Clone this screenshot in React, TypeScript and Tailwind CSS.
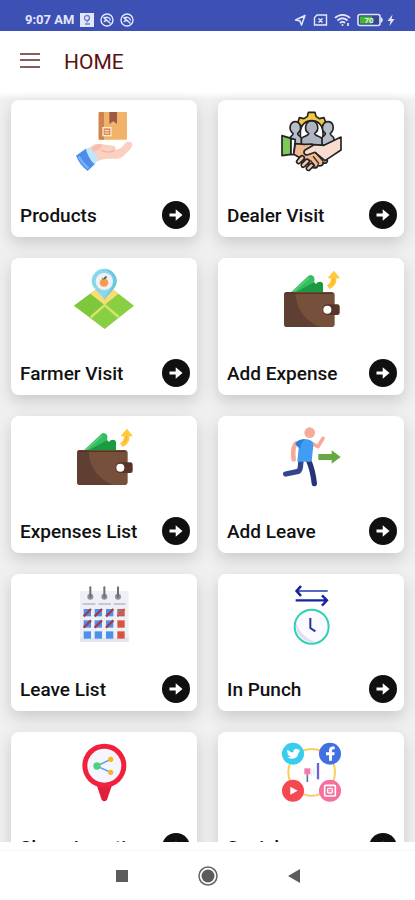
import type { ReactNode } from "react";

type Tile = {
  label: string;
  href: string;
  icon: ReactNode;
};

function Art({ children }: { children: ReactNode }) {
  return (
    <svg viewBox="0 0 180 180" className="h-[60px] w-[60px] overflow-visible" fill="none" aria-hidden="true">
      {children}
    </svg>
  );
}

function ProductsArt() {
  return (
    <Art>
      <rect x="74" y="3" width="85" height="83" rx="3" fill="#f3b269" />
      <path d="M77 3h13v83H77a3 3 0 0 1-3-3V6a3 3 0 0 1 3-3Z" fill="#cf8350" />
      <path d="M106 3h23v36l-11-8-12 8Z" fill="#9a5a45" />
      <rect x="87" y="50" width="24" height="24" fill="#d98b5c" stroke="#ffe9cf" strokeWidth="4" />
      <path d="M92 59h13M92 66h13" stroke="#ffe9cf" strokeWidth="3" />
      <path
        d="M47 112C58 98 72 96 84 100l34 4c10 3 9 12 2 15l21-9c7-3 10-12 16-16 8-4 19 0 18 8-6 16-20 28-34 38-15 6-34 2-48 4-11 1-17 5-24 7Z"
        fill="#fbd0c0"
      />
      <path d="M84 119c12 5 26 6 38-1" stroke="#eeb3a2" strokeWidth="4" strokeLinecap="round" />
      <path d="M52 112c12-14 24-14 34-11l-9 12-20 9Z" fill="#f7bcae" />
      <path d="M31 114l18-5 24 35-11 17Z" fill="#bfe6fb" />
      <path d="M6 134l29-21c5 17 14 34 27 47l-21 20C25 168 13 152 6 134Z" fill="#4d8eea" />
      <path d="M14 137c8 15 17 26 30 36" stroke="#75b0fa" strokeWidth="7" />
    </Art>
  );
}

function DealerArt() {
  return (
    <Art>
      <g stroke="#222327" strokeWidth="5" strokeLinejoin="round" strokeLinecap="round">
        <path
          d="M50 37l5-17 14 3 10-7 3-12h20l3 12 10 7 14-3 6 17-11 7-7 20H67l-6-20Z"
          fill="#f5c842"
        />
        <path d="M58 65c0-48 68-48 68 0v30H58Z" fill="#fff" />
        <path d="M26 84c0-9 12-10 10-17C20 55 28 32 43 32s23 23 7 35c-1 7 10 8 12 17v18H26Z" fill="#b9bdc7" />
        <path d="M122 84c0-9 13-10 11-17-16-12-8-35 8-35s22 23 7 35c-2 7 11 8 11 17v18h-37Z" fill="#b9bdc7" />
        <path d="M61 103V84c2-10 22-7 22-17-16-10-10-37 9-37s25 27 9 37c0 10 20 7 22 17v19Z" fill="#aeb4c0" />
        <path d="M3 74l27 8v48L3 134Z" fill="#81c957" />
        <path d="M30 82l13 4-5 44-8 1Z" fill="#fff" />
        <path d="M43 98l28 2 22-1 20 11 25 35c4 9-5 15-12 9 2 9-9 14-15 8 0 9-12 12-19 5L70 148l-32-18Z" fill="#f0b98e" />
        <path d="M180 78v39l-48 32-30-25-23 8c-13 0-13-13-3-17l23-14 30 2Z" fill="#f9dcd0" />
        <path
          d="M49 147c-6 6 2 15 8 9l12-12c4-7-6-14-11-7Zm13 11c-5 6 3 14 9 9l13-13c4-7-6-13-11-7Zm15 11c-4 6 4 12 9 8l11-11c4-6-5-12-10-7Z"
          fill="#f5c9a6"
        />
        <path d="M104 125l22 25M97 137l16 20M89 149l13 17" strokeWidth="4" />
      </g>
    </Art>
  );
}

function FarmerArt() {
  return (
    <Art>
      <path d="M0 110 92 42l88 68-88 70Z" fill="#89cf43" />
      <path d="M0 110l49-36 43 34-40 39Z" fill="#7fc83c" />
      <path d="M49 74 92 42l41 32-41 34Z" fill="#f8dc75" />
      <path d="M50 145l42-37 42 36" stroke="#d8e56b" strokeWidth="7" />
      <path d="M92 94C83 72 53 61 53 37a37 37 0 0 1 75 0c0 24-27 35-36 57Z" fill="#86d8ea" />
      <path d="M92 94c4-22 26-34 26-57A37 37 0 0 0 90 0a37 37 0 0 1 38 37c0 24-27 35-36 57Z" fill="#69c7df" />
      <circle cx="91" cy="37" r="26" fill="#f0eff8" />
      <ellipse cx="90" cy="41" rx="13" ry="12" fill="#f59a50" />
      <path d="M90 31c-1-7 3-10 9-9-1 6-3 8-9 9Z" fill="#456a3d" />
      <path d="M84 27l6 4" stroke="#456a3d" strokeWidth="3" />
    </Art>
  );
}

function WalletArt() {
  return (
    <Art>
      <path d="M28 71 82 21q6-5 13-1 7 4 5 16L84 71Z" fill="#36bd61" />
      <path d="M42 71 100 39q4 10 10 1 12-5 16 4v27Z" fill="#1c9a3f" />
      <path d="M35 70 84 27" stroke="#5bd27d" strokeWidth="4" />
      <rect x="9" y="69" width="152" height="105" rx="10" fill="#76503b" />
      <path d="M44 69c0 49 27 87 75 105H19a10 10 0 0 1-10-10V79a10 10 0 0 1 10-10Z" fill="#5f3f31" />
      <path d="M13 73h142" stroke="#533429" strokeWidth="4" />
      <path d="M140 106h29q7 0 7 7v18q0 7-7 7h-29q-15 0-15-16t15-16Z" fill="#573629" />
      <circle cx="139" cy="122" r="12" fill="#fff" />
      <path d="M159 5l18 23h-11c2 15-7 27-21 32l-7-12c9-4 13-11 11-20h-10Z" fill="#ffc83d" />
      <path d="M150 46c6-5 8-11 8-18" stroke="#f3a622" strokeWidth="3" />
    </Art>
  );
}

function RunnerArt() {
  return (
    <Art>
      <circle cx="86" cy="17" r="16" fill="#f7aa98" />
      <path d="M46 49c-12 10-11 29-8 48" stroke="#f7aa98" strokeWidth="14" strokeLinecap="round" />
      <path d="M94 50l17 9 15-25" stroke="#f7aa98" strokeWidth="11" strokeLinecap="round" strokeLinejoin="round" />
      <path d="M60 104c-3 12 1 22-8 29l-38 8" stroke="#34458b" strokeWidth="16" strokeLinecap="round" strokeLinejoin="round" />
      <path d="M84 103c9 21 12 32 16 67" stroke="#253578" strokeWidth="16" strokeLinecap="round" strokeLinejoin="round" />
      <path d="M43 51c6-11 17-14 30-14 12 0 24 4 24 16l-5 51H49l4-42Z" fill="#419df3" />
      <path d="M43 51c6-11 17-14 30-14-9 5-14 14-16 28Z" fill="#277fda" />
      <path d="M112 81h40V70l27 20-27 20V99h-40Z" fill="#66a940" />
    </Art>
  );
}

function CalendarArt() {
  const columns = [29, 62, 96, 130];
  const rows = [72, 106, 139];
  return (
    <Art>
      <path d="M18 18h146v152H18Z" fill="#eef0f6" />
      <path d="M18 158h146v12H18Z" fill="#e2e5ed" />
      {[49, 91, 132].map((x) => (
        <g key={x}>
          <circle cx={x} cy="35" r="9" fill="#8d9098" />
          <path d={`M${x} 7v28`} stroke="#6b6e77" strokeWidth="6" strokeLinecap="round" />
        </g>
      ))}
      <path d="M26 57h38M73 57h38M119 57h35" stroke="#b8bbc3" strokeWidth="5" />
      {rows.map((y, r) =>
        columns.map((x, c) => (
          <g key={`${x}-${y}`}>
            <rect x={x} y={y} width="22" height="22" fill={c === 3 ? "#d9533e" : "#4c91ee"} />
            {c === 3 && r === 0 && <path d={`M${x + 3} ${y + 3}h12v15h-12Z`} fill="#6582cb" />}
            {r < 2 && c < 3 && <path d={`M${x} ${y + 22}l22-22`} stroke="#a63a4b" strokeWidth="7" />}
            {r === 0 && c === 3 && <path d={`M${x} ${y + 22}l22-22`} stroke="#d45743" strokeWidth="6" />}
          </g>
        )),
      )}
    </Art>
  );
}

function PunchArt() {
  return (
    <Art>
      <path d="M48 18h92" stroke="#5969bd" strokeWidth="6" />
      <path d="M60 3 47 18l13 15" stroke="#1522a2" strokeWidth="8" />
      <path d="M44 46h93M123 31l15 15-15 16" stroke="#1522a2" strokeWidth="7" />
      <circle cx="92" cy="125" r="51" fill="#fbfbff" stroke="#2dd0b1" strokeWidth="6" />
      <path d="M45 113c-3 39 28 62 62 58-29-7-50-26-62-58Z" fill="#dfdff1" />
      <path d="M88 99v30l15 10" stroke="#2636a1" strokeWidth="6" />
    </Art>
  );
}

function ShareArt() {
  return (
    <Art>
      <path d="M66 121h50l-17 49q-8 9-16 0Z" fill="#df1f3c" />
      <circle cx="91" cy="68" r="66" fill="#f1203c" />
      <circle cx="91" cy="68" r="51" fill="#f3f6ff" />
      <path d="M110 49 69 69l41 19" stroke="#4c94ea" strokeWidth="4" />
      <circle cx="69" cy="69" r="11" fill="#4ed17e" />
      <circle cx="110" cy="49" r="8" fill="#fbb51e" />
      <circle cx="110" cy="88" r="8" fill="#fbb51e" />
    </Art>
  );
}

function SocialArt() {
  return (
    <Art>
      <circle cx="92" cy="88" r="70" stroke="#f6cf60" strokeWidth="6" />
      <circle cx="36" cy="32" r="33" fill="#36cdef" />
      <circle cx="147" cy="32" r="33" fill="#426fe3" />
      <circle cx="36" cy="143" r="33" fill="#f64850" />
      <circle cx="147" cy="143" r="33" fill="#f5709c" />
      <path
        d="M20 20c6 6 11 8 17 8-1-10 9-13 14-8l6-2-3 6 3 1-5 5c-1 16-20 22-34 13 6 0 8-1 10-3-5-2-8-4-9-7l4-1c-4-3-6-5-5-8Z"
        fill="#fff"
      />
      <path d="M144 53V37h-9v-9h9v-5c0-10 6-14 17-12v8c-6 0-8 1-8 5v4h8l-1 9h-7v16Z" fill="#fff" />
      <path d="M28 131l22 12-22 12Z" fill="#fff" />
      <rect x="131" y="127" width="32" height="32" rx="3" stroke="#fff" strokeWidth="5" />
      <rect x="140" y="136" width="14" height="14" rx="3" stroke="#fff" strokeWidth="4" />
      <circle cx="147" cy="143" r="2" fill="#fff" />
      <path d="M79 94v23" stroke="#60749c" strokeWidth="5" />
      <rect x="70" y="76" width="18" height="18" fill="#f27baa" />
      <path d="M92 80v20M99 76v20" stroke="#dceffa" strokeWidth="4" />
      <path d="M111 60v49" stroke="#7162d7" strokeWidth="7" />
    </Art>
  );
}

const tiles: Tile[] = [
  { label: "Products", href: "#products", icon: <ProductsArt /> },
  { label: "Dealer Visit", href: "#dealer-visit", icon: <DealerArt /> },
  { label: "Farmer Visit", href: "#farmer-visit", icon: <FarmerArt /> },
  { label: "Add Expense", href: "#add-expense", icon: <WalletArt /> },
  { label: "Expenses List", href: "#expenses-list", icon: <WalletArt /> },
  { label: "Add Leave", href: "#add-leave", icon: <RunnerArt /> },
  { label: "Leave List", href: "#leave-list", icon: <CalendarArt /> },
  { label: "In Punch", href: "#in-punch", icon: <PunchArt /> },
  { label: "Share Location", href: "#share-location", icon: <ShareArt /> },
  { label: "Social", href: "#social", icon: <SocialArt /> },
];

function TileCard({ tile }: { tile: Tile }) {
  return (
    <a
      href={tile.href}
      className="flex h-[137px] flex-col items-center justify-between rounded-lg bg-white pt-[11px] pb-2 shadow-[0_6px_16px_rgba(0,0,0,0.16)]"
    >
      {tile.icon}
      <span className="flex w-full items-end justify-between pr-[7px] pl-[9px]">
        <span className="text-[19px] leading-[26px] font-medium whitespace-nowrap text-[#111]">{tile.label}</span>
        <svg viewBox="0 0 28 28" className="h-7 w-7 shrink-0" aria-hidden="true">
          <circle cx="14" cy="14" r="14" fill="#101010" />
          <path d="M7.5 12.4h6.2V8.2l6.8 5.8-6.8 5.8v-4.2H7.5Z" fill="#fff" />
        </svg>
      </span>
    </a>
  );
}

function StatusBar() {
  return (
    <div className="flex h-[31px] shrink-0 items-center justify-between bg-[#3d50b4] pt-2 pr-5 pl-[25px] text-[#e3e7fb]">
      <div className="flex items-center gap-[6px]">
        <span className="text-[13px] leading-4 font-bold whitespace-nowrap">9:07 AM</span>
        <svg viewBox="0 0 14 14" className="h-[14px] w-[14px]" fill="none" aria-hidden="true">
          <path d="M0 0h14v14H0Z" fill="#e3e7fb" />
          <circle cx="7" cy="5" r="2.5" stroke="#7180c7" strokeWidth="1.3" />
          <path d="M9.5 4.5c0 3-2.5 3-2.5 5M5 11h5" stroke="#7180c7" strokeWidth="1.3" />
        </svg>
        {[0, 1].map((n) => (
          <svg key={n} viewBox="0 0 14 14" className="h-[14px] w-[14px]" fill="none" stroke="currentColor" aria-hidden="true">
            <circle cx="7" cy="7" r="6" strokeWidth="1.4" />
            <path d="M4 6c2-3 6-2 6.5 1.5M4 9c1-2 3.5-2 4.5 0M3.5 4l7 6.5" strokeWidth="1.4" />
          </svg>
        ))}
      </div>
      <div className="flex items-center gap-[6px]">
        <svg viewBox="0 0 14 14" className="h-[14px] w-[14px]" fill="none" stroke="currentColor" strokeWidth="1.5" aria-hidden="true">
          <path d="M2.5 7 12 2.5 8.5 12 7 8Z" strokeLinejoin="round" />
        </svg>
        <svg viewBox="0 0 15 14" className="h-[14px] w-[15px]" fill="none" stroke="currentColor" strokeWidth="1.4" aria-hidden="true">
          <path d="M4 2h9.5v10h-12V4.5ZM5.5 5.5l4 4M9.5 5.5l-4 4" />
        </svg>
        <svg viewBox="0 0 17 14" className="h-[14px] w-[17px]" fill="none" stroke="currentColor" strokeWidth="1.8" aria-hidden="true">
          <path d="M1 5c4-4.3 11-4.3 15 0M3.5 7.5c3-3 7-3 10 0M6 10c1.5-1.5 3.5-1.5 5 0" />
          <circle cx="8.5" cy="12" r="1" fill="currentColor" stroke="none" />
          <path d="M14 10v3" />
        </svg>
        <div className="flex items-center gap-1">
          <svg viewBox="0 0 26 14" className="h-[14px] w-[26px]" aria-hidden="true">
            <rect x="1" y="1.5" width="22" height="11" rx="2" fill="#354794" stroke="#dfe4fa" strokeWidth="1.6" />
            <path d="M3 3.5h12v7H3Z" fill="#46b52f" />
            <path d="M23.5 4c3 1 3 5 0 6Z" fill="#dfe4fa" />
            <text x="12" y="10" textAnchor="middle" fontSize="8" fontWeight="700" fill="#eff5ea">
              70
            </text>
          </svg>
          <svg viewBox="0 0 8 14" className="h-[14px] w-2" aria-hidden="true">
            <path d="M5.5 1.5.5 8h3l-1 5 5-7h-3Z" fill="currentColor" />
          </svg>
        </div>
      </div>
    </div>
  );
}

export default function App() {
  return (
    <div className="flex h-screen flex-col overflow-hidden bg-white font-[Roboto,sans-serif]">
      <StatusBar />

      <header className="flex h-[61px] shrink-0 items-center gap-6 bg-white px-5">
        <button type="button" aria-label="Open menu" className="h-5 w-5">
          <svg viewBox="0 0 20 20" className="h-5 w-5" fill="none" stroke="#865c5c" strokeWidth="2" aria-hidden="true">
            <path d="M0 2h20M0 8h20M0 15h20" />
          </svg>
        </button>
        <h1 className="text-[21px] leading-7 text-[#5b1010]">HOME</h1>
      </header>

      <main className="min-h-0 flex-1 overflow-hidden bg-linear-to-b from-white to-[#f0f0f0] to-[8px] px-[11px] pt-2">
        <div className="grid grid-cols-2 gap-[21px]">
          {tiles.map((tile) => (
            <TileCard key={tile.label} tile={tile} />
          ))}
        </div>
      </main>

      <nav aria-label="System" className="shrink-0 bg-white pt-2">
        <div className="flex h-[50px] items-center justify-center gap-[62px] border-t border-[#f6f6f6]">
          <button type="button" aria-label="Recent apps" className="h-6 w-6">
            <svg viewBox="0 0 24 24" className="h-6 w-6" aria-hidden="true">
              <path d="M6 6h12v12H6Z" fill="#5c5c5c" />
            </svg>
          </button>
          <button type="button" aria-label="Home" className="h-6 w-6">
            <svg viewBox="0 0 24 24" className="h-6 w-6" aria-hidden="true">
              <circle cx="12" cy="12" r="9" fill="#fff" stroke="#646464" strokeWidth="1.5" />
              <circle cx="12" cy="12" r="6.5" fill="#5c5c5c" />
            </svg>
          </button>
          <button type="button" aria-label="Back" className="h-6 w-6">
            <svg viewBox="0 0 24 24" className="h-6 w-6" aria-hidden="true">
              <path d="M6 12 18 5v14Z" fill="#5c5c5c" />
            </svg>
          </button>
        </div>
      </nav>
    </div>
  );
}
